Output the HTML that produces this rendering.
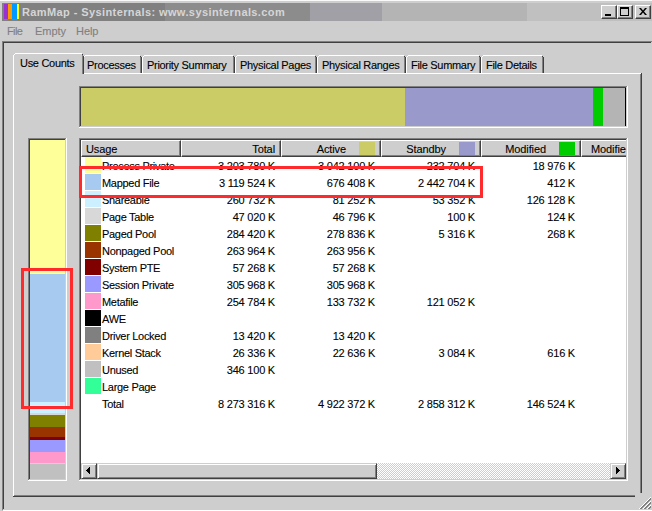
<!DOCTYPE html>
<html><head><meta charset="utf-8">
<style>
*{margin:0;padding:0;box-sizing:border-box}
html,body{width:652px;height:511px;overflow:hidden;background:#cecece;position:relative;font-family:"Liberation Sans",sans-serif;font-size:11px;color:#000}
.a{position:absolute}
.t{position:absolute;white-space:nowrap;line-height:11px;letter-spacing:-0.3px;-webkit-text-stroke:0.1px currentColor}
.n{letter-spacing:-0.22px}
</style></head><body>
<!-- window top -->
<div class="a" style="left:0;top:0;width:652px;height:1px;background:#fafafa"></div>
<!-- title bar -->
<div class="a" style="left:2px;top:3px;width:650px;height:18px;background:linear-gradient(to right,#808080 0,#808080 163px,#8c8c8c 163px,#8c8c8c 308px,#a0a0a6 308px,#a0a0a6 380px,#b4b4b4 380px,#b4b4b4 525px,#c0c0c0 525px)"></div>
<div class="a" style="left:4px;top:4px;width:4px;height:15px;background:#9b30d0"></div>
<div class="a" style="left:8px;top:4px;width:4px;height:15px;background:#ff9900"></div>
<div class="a" style="left:12px;top:4px;width:5px;height:15px;background:#0099ff"></div>
<div class="a" style="left:17px;top:4px;width:2px;height:15px;background:#ffff00"></div>
<div class="t" style="left:22px;top:7px;font-weight:bold;color:#d6d6d6;letter-spacing:0.4px;-webkit-text-stroke:0">RamMap - Sysinternals: www.sysinternals.com</div>
<!-- title buttons -->
<div class="a" style="left:601px;top:5px;width:16px;height:14px;background:#cecece;border-top:1px solid #fff;border-left:1px solid #fff;border-right:1px solid #404040;border-bottom:1px solid #404040;box-shadow:inset -1px -1px 0 #808080"></div>
<div class="a" style="left:605px;top:14px;width:6px;height:2px;background:#000"></div>
<div class="a" style="left:617px;top:5px;width:16px;height:14px;background:#cecece;border-top:1px solid #fff;border-left:1px solid #fff;border-right:1px solid #404040;border-bottom:1px solid #404040;box-shadow:inset -1px -1px 0 #808080"></div>
<div class="a" style="left:620px;top:7px;width:9px;height:9px;border:1px solid #000;border-top-width:2px"></div>
<div class="a" style="left:635px;top:5px;width:16px;height:14px;background:#cecece;border-top:1px solid #fff;border-left:1px solid #fff;border-right:1px solid #404040;border-bottom:1px solid #404040;box-shadow:inset -1px -1px 0 #808080"></div>
<svg class="a" style="left:639px;top:8px" width="8" height="7" viewBox="0 0 8 7"><path d="M0 0h2l2 2.5 2-2.5h2l-3 3.5 3 3.5h-2l-2-2.5-2 2.5h-2l3-3.5z" fill="#000"/></svg>
<!-- menu -->
<div class="t" style="left:7px;top:26px;color:#808080;letter-spacing:-0.6px">File</div>
<div class="t" style="left:35px;top:26px;color:#808080;letter-spacing:-0.05px">Empty</div>
<div class="t" style="left:76px;top:26px;color:#808080;letter-spacing:-0.05px">Help</div>
<!-- client sunken frame -->
<div class="a" style="left:2px;top:41px;width:650px;height:470px;border-top:1px solid #808080;border-left:1px solid #808080;border-bottom:1px solid #fff"></div>
<div class="a" style="left:3px;top:42px;width:648px;height:467px;border-top:1px solid #404040;border-left:1px solid #404040"></div>
<div class="a" style="left:85px;top:55px;width:55px;height:1px;background:#fff"></div>
<div class="a" style="left:84px;top:56px;width:1px;height:1px;background:#fff"></div>
<div class="a" style="left:83px;top:57px;width:1px;height:16px;background:#fff"></div>
<div class="a" style="left:140px;top:56px;width:1px;height:17px;background:#808080"></div>
<div class="a" style="left:141px;top:57px;width:1px;height:16px;background:#404040"></div>
<div class="a" style="left:140px;top:56px;width:1px;height:1px;background:#404040"></div>
<div class="t" style="left:87px;top:60px">Processes</div>
<div class="a" style="left:144px;top:55px;width:89px;height:1px;background:#fff"></div>
<div class="a" style="left:143px;top:56px;width:1px;height:1px;background:#fff"></div>
<div class="a" style="left:142px;top:57px;width:1px;height:16px;background:#fff"></div>
<div class="a" style="left:233px;top:56px;width:1px;height:17px;background:#808080"></div>
<div class="a" style="left:234px;top:57px;width:1px;height:16px;background:#404040"></div>
<div class="a" style="left:233px;top:56px;width:1px;height:1px;background:#404040"></div>
<div class="t" style="left:147px;top:60px">Priority Summary</div>
<div class="a" style="left:237px;top:55px;width:78px;height:1px;background:#fff"></div>
<div class="a" style="left:236px;top:56px;width:1px;height:1px;background:#fff"></div>
<div class="a" style="left:235px;top:57px;width:1px;height:16px;background:#fff"></div>
<div class="a" style="left:315px;top:56px;width:1px;height:17px;background:#808080"></div>
<div class="a" style="left:316px;top:57px;width:1px;height:16px;background:#404040"></div>
<div class="a" style="left:315px;top:56px;width:1px;height:1px;background:#404040"></div>
<div class="t" style="left:240px;top:60px">Physical Pages</div>
<div class="a" style="left:319px;top:55px;width:85px;height:1px;background:#fff"></div>
<div class="a" style="left:318px;top:56px;width:1px;height:1px;background:#fff"></div>
<div class="a" style="left:317px;top:57px;width:1px;height:16px;background:#fff"></div>
<div class="a" style="left:404px;top:56px;width:1px;height:17px;background:#808080"></div>
<div class="a" style="left:405px;top:57px;width:1px;height:16px;background:#404040"></div>
<div class="a" style="left:404px;top:56px;width:1px;height:1px;background:#404040"></div>
<div class="t" style="left:322px;top:60px">Physical Ranges</div>
<div class="a" style="left:408px;top:55px;width:71px;height:1px;background:#fff"></div>
<div class="a" style="left:407px;top:56px;width:1px;height:1px;background:#fff"></div>
<div class="a" style="left:406px;top:57px;width:1px;height:16px;background:#fff"></div>
<div class="a" style="left:479px;top:56px;width:1px;height:17px;background:#808080"></div>
<div class="a" style="left:480px;top:57px;width:1px;height:16px;background:#404040"></div>
<div class="a" style="left:479px;top:56px;width:1px;height:1px;background:#404040"></div>
<div class="t" style="left:411px;top:60px">File Summary</div>
<div class="a" style="left:483px;top:55px;width:59px;height:1px;background:#fff"></div>
<div class="a" style="left:482px;top:56px;width:1px;height:1px;background:#fff"></div>
<div class="a" style="left:481px;top:57px;width:1px;height:16px;background:#fff"></div>
<div class="a" style="left:542px;top:56px;width:1px;height:17px;background:#808080"></div>
<div class="a" style="left:543px;top:57px;width:1px;height:16px;background:#404040"></div>
<div class="a" style="left:542px;top:56px;width:1px;height:1px;background:#404040"></div>
<div class="t" style="left:486px;top:60px">File Details</div>
<div class="a" style="left:13px;top:73px;width:628px;height:1px;background:#fff"></div>
<div class="a" style="left:13px;top:73px;width:1px;height:423px;background:#fff"></div>
<div class="a" style="left:640px;top:74px;width:1px;height:422px;background:#808080"></div>
<div class="a" style="left:641px;top:73px;width:1px;height:424px;background:#404040"></div>
<div class="a" style="left:14px;top:495px;width:627px;height:1px;background:#808080"></div>
<div class="a" style="left:13px;top:496px;width:629px;height:1px;background:#404040"></div>
<div class="a" style="left:14px;top:54px;width:68px;height:20px;background:#cecece"></div>
<div class="a" style="left:15px;top:53px;width:67px;height:1px;background:#fff"></div>
<div class="a" style="left:14px;top:54px;width:1px;height:1px;background:#fff"></div>
<div class="a" style="left:13px;top:55px;width:1px;height:19px;background:#fff"></div>
<div class="a" style="left:82px;top:54px;width:1px;height:20px;background:#808080"></div>
<div class="a" style="left:83px;top:56px;width:1px;height:18px;background:#404040"></div>
<div class="a" style="left:82px;top:54px;width:1px;height:1px;background:#404040"></div>
<div class="t" style="left:20px;top:58px">Use Counts</div>
<div class="a" style="left:635px;top:493px;width:17px;height:16px;background:#cecece"></div>
<svg class="a" style="left:639px;top:497px" width="12" height="12" shape-rendering="crispEdges"><rect x="0" y="11" width="1" height="1" fill="#fff"/><rect x="1" y="10" width="1" height="1" fill="#fff"/><rect x="2" y="9" width="1" height="1" fill="#fff"/><rect x="3" y="8" width="1" height="1" fill="#fff"/><rect x="4" y="7" width="1" height="1" fill="#fff"/><rect x="5" y="6" width="1" height="1" fill="#fff"/><rect x="6" y="5" width="1" height="1" fill="#fff"/><rect x="7" y="4" width="1" height="1" fill="#fff"/><rect x="8" y="3" width="1" height="1" fill="#fff"/><rect x="9" y="2" width="1" height="1" fill="#fff"/><rect x="10" y="1" width="1" height="1" fill="#fff"/><rect x="11" y="0" width="1" height="1" fill="#fff"/><rect x="1" y="11" width="1" height="1" fill="#808080"/><rect x="2" y="10" width="1" height="1" fill="#808080"/><rect x="3" y="9" width="1" height="1" fill="#808080"/><rect x="4" y="8" width="1" height="1" fill="#808080"/><rect x="5" y="7" width="1" height="1" fill="#808080"/><rect x="6" y="6" width="1" height="1" fill="#808080"/><rect x="7" y="5" width="1" height="1" fill="#808080"/><rect x="8" y="4" width="1" height="1" fill="#808080"/><rect x="9" y="3" width="1" height="1" fill="#808080"/><rect x="10" y="2" width="1" height="1" fill="#808080"/><rect x="11" y="1" width="1" height="1" fill="#808080"/><rect x="2" y="11" width="1" height="1" fill="#808080"/><rect x="3" y="10" width="1" height="1" fill="#808080"/><rect x="4" y="9" width="1" height="1" fill="#808080"/><rect x="5" y="8" width="1" height="1" fill="#808080"/><rect x="6" y="7" width="1" height="1" fill="#808080"/><rect x="7" y="6" width="1" height="1" fill="#808080"/><rect x="8" y="5" width="1" height="1" fill="#808080"/><rect x="9" y="4" width="1" height="1" fill="#808080"/><rect x="10" y="3" width="1" height="1" fill="#808080"/><rect x="11" y="2" width="1" height="1" fill="#808080"/><rect x="4" y="11" width="1" height="1" fill="#fff"/><rect x="5" y="10" width="1" height="1" fill="#fff"/><rect x="6" y="9" width="1" height="1" fill="#fff"/><rect x="7" y="8" width="1" height="1" fill="#fff"/><rect x="8" y="7" width="1" height="1" fill="#fff"/><rect x="9" y="6" width="1" height="1" fill="#fff"/><rect x="10" y="5" width="1" height="1" fill="#fff"/><rect x="11" y="4" width="1" height="1" fill="#fff"/><rect x="5" y="11" width="1" height="1" fill="#808080"/><rect x="6" y="10" width="1" height="1" fill="#808080"/><rect x="7" y="9" width="1" height="1" fill="#808080"/><rect x="8" y="8" width="1" height="1" fill="#808080"/><rect x="9" y="7" width="1" height="1" fill="#808080"/><rect x="10" y="6" width="1" height="1" fill="#808080"/><rect x="11" y="5" width="1" height="1" fill="#808080"/><rect x="6" y="11" width="1" height="1" fill="#808080"/><rect x="7" y="10" width="1" height="1" fill="#808080"/><rect x="8" y="9" width="1" height="1" fill="#808080"/><rect x="9" y="8" width="1" height="1" fill="#808080"/><rect x="10" y="7" width="1" height="1" fill="#808080"/><rect x="11" y="6" width="1" height="1" fill="#808080"/><rect x="8" y="11" width="1" height="1" fill="#fff"/><rect x="9" y="10" width="1" height="1" fill="#fff"/><rect x="10" y="9" width="1" height="1" fill="#fff"/><rect x="11" y="8" width="1" height="1" fill="#fff"/><rect x="9" y="11" width="1" height="1" fill="#808080"/><rect x="10" y="10" width="1" height="1" fill="#808080"/><rect x="11" y="9" width="1" height="1" fill="#808080"/><rect x="10" y="11" width="1" height="1" fill="#808080"/><rect x="11" y="10" width="1" height="1" fill="#808080"/></svg>
<div class="a" style="left:79px;top:86px;width:548px;height:1px;background:#808080"></div>
<div class="a" style="left:79px;top:86px;width:1px;height:41px;background:#808080"></div>
<div class="a" style="left:80px;top:87px;width:546px;height:1px;background:#404040"></div>
<div class="a" style="left:80px;top:87px;width:1px;height:39px;background:#404040"></div>
<div class="a" style="left:79px;top:127px;width:549px;height:1px;background:#fff"></div>
<div class="a" style="left:627px;top:86px;width:1px;height:42px;background:#fff"></div>
<div class="a" style="left:81px;top:88px;width:324px;height:38px;background:#cccc66"></div>
<div class="a" style="left:405px;top:88px;width:188px;height:38px;background:#9999cc"></div>
<div class="a" style="left:593px;top:88px;width:10px;height:38px;background:#00cc00"></div>
<div class="a" style="left:603px;top:88px;width:22px;height:38px;background:#b4b4b4"></div>
<div class="a" style="left:625px;top:88px;width:1px;height:38px;background:#000"></div>
<div class="a" style="left:28px;top:138px;width:38px;height:1px;background:#808080"></div>
<div class="a" style="left:28px;top:138px;width:1px;height:342px;background:#808080"></div>
<div class="a" style="left:29px;top:139px;width:36px;height:1px;background:#404040"></div>
<div class="a" style="left:29px;top:139px;width:1px;height:340px;background:#404040"></div>
<div class="a" style="left:28px;top:480px;width:39px;height:1px;background:#fff"></div>
<div class="a" style="left:66px;top:138px;width:1px;height:343px;background:#fff"></div>
<div class="a" style="left:30px;top:140px;width:35px;height:134px;background:#ffff99"></div>
<div class="a" style="left:30px;top:274px;width:35px;height:128px;background:#a6caf0"></div>
<div class="a" style="left:30px;top:402px;width:35px;height:11px;background:#ccf0ff"></div>
<div class="a" style="left:30px;top:413px;width:35px;height:2px;background:#d8d8d8"></div>
<div class="a" style="left:30px;top:415px;width:35px;height:12px;background:#808000"></div>
<div class="a" style="left:30px;top:427px;width:35px;height:10px;background:#993300"></div>
<div class="a" style="left:30px;top:437px;width:35px;height:3px;background:#800000"></div>
<div class="a" style="left:30px;top:440px;width:35px;height:12px;background:#9999ff"></div>
<div class="a" style="left:30px;top:452px;width:35px;height:11px;background:#ff99cc"></div>
<div class="a" style="left:30px;top:463px;width:35px;height:1px;background:#ffcc99"></div>
<div class="a" style="left:30px;top:464px;width:35px;height:15px;background:#c0c0c0"></div>
<div class="a" style="left:79px;top:138px;width:548px;height:1px;background:#808080"></div>
<div class="a" style="left:79px;top:138px;width:1px;height:342px;background:#808080"></div>
<div class="a" style="left:80px;top:139px;width:546px;height:1px;background:#404040"></div>
<div class="a" style="left:80px;top:139px;width:1px;height:340px;background:#404040"></div>
<div class="a" style="left:79px;top:480px;width:549px;height:1px;background:#fff"></div>
<div class="a" style="left:627px;top:138px;width:1px;height:343px;background:#fff"></div>
<div class="a" style="left:81px;top:140px;width:545px;height:339px;background:#fff"></div>
<div class="a" style="left:81px;top:140px;width:545px;height:17px;overflow:hidden">
<div class="a" style="left:0px;top:0;width:100px;height:17px;background:#cecece;border-top:1px solid #fff;border-left:1px solid #fff;border-right:1px solid #404040;border-bottom:1px solid #404040;box-shadow:inset -1px -1px 0 #808080"></div>
<div class="t" style="left:5px;top:4px;letter-spacing:-0.1px">Usage</div>
<div class="a" style="left:100px;top:0;width:100px;height:17px;background:#cecece;border-top:1px solid #fff;border-left:1px solid #fff;border-right:1px solid #404040;border-bottom:1px solid #404040;box-shadow:inset -1px -1px 0 #808080"></div>
<div class="t" style="left:100px;top:4px;width:94px;text-align:right;letter-spacing:-0.1px">Total</div>
<div class="a" style="left:200px;top:0;width:100px;height:17px;background:#cecece;border-top:1px solid #fff;border-left:1px solid #fff;border-right:1px solid #404040;border-bottom:1px solid #404040;box-shadow:inset -1px -1px 0 #808080"></div>
<div class="a" style="left:278px;top:2px;width:16px;height:13px;background:#cccc66"></div>
<div class="t" style="left:200px;top:4px;width:65px;text-align:right;letter-spacing:-0.1px">Active</div>
<div class="a" style="left:300px;top:0;width:100px;height:17px;background:#cecece;border-top:1px solid #fff;border-left:1px solid #fff;border-right:1px solid #404040;border-bottom:1px solid #404040;box-shadow:inset -1px -1px 0 #808080"></div>
<div class="a" style="left:378px;top:2px;width:16px;height:13px;background:#9999cc"></div>
<div class="t" style="left:300px;top:4px;width:65px;text-align:right;letter-spacing:-0.1px">Standby</div>
<div class="a" style="left:400px;top:0;width:100px;height:17px;background:#cecece;border-top:1px solid #fff;border-left:1px solid #fff;border-right:1px solid #404040;border-bottom:1px solid #404040;box-shadow:inset -1px -1px 0 #808080"></div>
<div class="a" style="left:478px;top:2px;width:16px;height:13px;background:#00cc00"></div>
<div class="t" style="left:400px;top:4px;width:65px;text-align:right;letter-spacing:-0.1px">Modified</div>
<div class="a" style="left:500px;top:0;width:120px;height:17px;background:#cecece;border-top:1px solid #fff;border-left:1px solid #fff;border-right:1px solid #404040;border-bottom:1px solid #404040;box-shadow:inset -1px -1px 0 #808080"></div>
<div class="t" style="left:510px;top:4px;letter-spacing:-0.1px">Modified</div>
</div>
<div class="a" style="left:85px;top:157px;width:16px;height:16px;background:#ffff99"></div>
<div class="t" style="left:102px;top:161px">Process Private</div>
<div class="t n" style="left:175px;top:161px;width:100px;text-align:right">3 203 780 K</div>
<div class="t n" style="left:275px;top:161px;width:100px;text-align:right">3 042 100 K</div>
<div class="t n" style="left:375px;top:161px;width:100px;text-align:right">232 704 K</div>
<div class="t n" style="left:475px;top:161px;width:100px;text-align:right">18 976 K</div>
<div class="a" style="left:85px;top:174px;width:16px;height:16px;background:#a6caf0"></div>
<div class="t" style="left:102px;top:178px">Mapped File</div>
<div class="t n" style="left:175px;top:178px;width:100px;text-align:right">3 119 524 K</div>
<div class="t n" style="left:275px;top:178px;width:100px;text-align:right">676 408 K</div>
<div class="t n" style="left:375px;top:178px;width:100px;text-align:right">2 442 704 K</div>
<div class="t n" style="left:475px;top:178px;width:100px;text-align:right">412 K</div>
<div class="a" style="left:85px;top:191px;width:16px;height:16px;background:#ccf0ff"></div>
<div class="t" style="left:102px;top:195px">Shareable</div>
<div class="t n" style="left:175px;top:195px;width:100px;text-align:right">260 732 K</div>
<div class="t n" style="left:275px;top:195px;width:100px;text-align:right">81 252 K</div>
<div class="t n" style="left:375px;top:195px;width:100px;text-align:right">53 352 K</div>
<div class="t n" style="left:475px;top:195px;width:100px;text-align:right">126 128 K</div>
<div class="a" style="left:85px;top:208px;width:16px;height:16px;background:#d8d8d8"></div>
<div class="t" style="left:102px;top:212px">Page Table</div>
<div class="t n" style="left:175px;top:212px;width:100px;text-align:right">47 020 K</div>
<div class="t n" style="left:275px;top:212px;width:100px;text-align:right">46 796 K</div>
<div class="t n" style="left:375px;top:212px;width:100px;text-align:right">100 K</div>
<div class="t n" style="left:475px;top:212px;width:100px;text-align:right">124 K</div>
<div class="a" style="left:85px;top:225px;width:16px;height:16px;background:#808000"></div>
<div class="t" style="left:102px;top:229px">Paged Pool</div>
<div class="t n" style="left:175px;top:229px;width:100px;text-align:right">284 420 K</div>
<div class="t n" style="left:275px;top:229px;width:100px;text-align:right">278 836 K</div>
<div class="t n" style="left:375px;top:229px;width:100px;text-align:right">5 316 K</div>
<div class="t n" style="left:475px;top:229px;width:100px;text-align:right">268 K</div>
<div class="a" style="left:85px;top:242px;width:16px;height:16px;background:#993300"></div>
<div class="t" style="left:102px;top:246px">Nonpaged Pool</div>
<div class="t n" style="left:175px;top:246px;width:100px;text-align:right">263 964 K</div>
<div class="t n" style="left:275px;top:246px;width:100px;text-align:right">263 956 K</div>
<div class="a" style="left:85px;top:259px;width:16px;height:16px;background:#800000"></div>
<div class="t" style="left:102px;top:263px">System PTE</div>
<div class="t n" style="left:175px;top:263px;width:100px;text-align:right">57 268 K</div>
<div class="t n" style="left:275px;top:263px;width:100px;text-align:right">57 268 K</div>
<div class="a" style="left:85px;top:276px;width:16px;height:16px;background:#9999ff"></div>
<div class="t" style="left:102px;top:280px">Session Private</div>
<div class="t n" style="left:175px;top:280px;width:100px;text-align:right">305 968 K</div>
<div class="t n" style="left:275px;top:280px;width:100px;text-align:right">305 968 K</div>
<div class="a" style="left:85px;top:293px;width:16px;height:16px;background:#ff99cc"></div>
<div class="t" style="left:102px;top:297px">Metafile</div>
<div class="t n" style="left:175px;top:297px;width:100px;text-align:right">254 784 K</div>
<div class="t n" style="left:275px;top:297px;width:100px;text-align:right">133 732 K</div>
<div class="t n" style="left:375px;top:297px;width:100px;text-align:right">121 052 K</div>
<div class="a" style="left:85px;top:310px;width:16px;height:16px;background:#000000"></div>
<div class="t" style="left:102px;top:314px">AWE</div>
<div class="a" style="left:85px;top:327px;width:16px;height:16px;background:#808080"></div>
<div class="t" style="left:102px;top:331px">Driver Locked</div>
<div class="t n" style="left:175px;top:331px;width:100px;text-align:right">13 420 K</div>
<div class="t n" style="left:275px;top:331px;width:100px;text-align:right">13 420 K</div>
<div class="a" style="left:85px;top:344px;width:16px;height:16px;background:#ffcc99"></div>
<div class="t" style="left:102px;top:348px">Kernel Stack</div>
<div class="t n" style="left:175px;top:348px;width:100px;text-align:right">26 336 K</div>
<div class="t n" style="left:275px;top:348px;width:100px;text-align:right">22 636 K</div>
<div class="t n" style="left:375px;top:348px;width:100px;text-align:right">3 084 K</div>
<div class="t n" style="left:475px;top:348px;width:100px;text-align:right">616 K</div>
<div class="a" style="left:85px;top:361px;width:16px;height:16px;background:#c0c0c0"></div>
<div class="t" style="left:102px;top:365px">Unused</div>
<div class="t n" style="left:175px;top:365px;width:100px;text-align:right">346 100 K</div>
<div class="a" style="left:85px;top:378px;width:16px;height:16px;background:#33ff99"></div>
<div class="t" style="left:102px;top:382px">Large Page</div>
<div class="t" style="left:102px;top:399px">Total</div>
<div class="t n" style="left:175px;top:399px;width:100px;text-align:right">8 273 316 K</div>
<div class="t n" style="left:275px;top:399px;width:100px;text-align:right">4 922 372 K</div>
<div class="t n" style="left:375px;top:399px;width:100px;text-align:right">2 858 312 K</div>
<div class="t n" style="left:475px;top:399px;width:100px;text-align:right">146 524 K</div>
<div class="a" style="left:81px;top:463px;width:545px;height:16px;background:repeating-conic-gradient(#fff 0 25%,#cecece 0 50%) 1px 0/2px 2px"></div>
<div class="a" style="left:81px;top:463px;width:16px;height:16px;background:#cecece;border-top:1px solid #cecece;border-left:1px solid #cecece;border-right:1px solid #404040;border-bottom:1px solid #404040;box-shadow:inset 1px 1px 0 #fff,inset -1px -1px 0 #808080"></div>
<div class="a" style="left:97px;top:463px;width:280px;height:16px;background:#cecece;border-top:1px solid #cecece;border-left:1px solid #cecece;border-right:1px solid #404040;border-bottom:1px solid #404040;box-shadow:inset 1px 1px 0 #fff,inset -1px -1px 0 #808080"></div>
<div class="a" style="left:610px;top:463px;width:16px;height:16px;background:#cecece;border-top:1px solid #cecece;border-left:1px solid #cecece;border-right:1px solid #404040;border-bottom:1px solid #404040;box-shadow:inset 1px 1px 0 #fff,inset -1px -1px 0 #808080"></div>
<svg class="a" style="left:86px;top:467px" width="4" height="7" shape-rendering="crispEdges"><rect x="0" y="3" width="1" height="1"/><rect x="1" y="2" width="1" height="3"/><rect x="2" y="1" width="1" height="5"/><rect x="3" y="0" width="1" height="7"/></svg>
<svg class="a" style="left:616px;top:467px" width="4" height="7" shape-rendering="crispEdges"><rect x="3" y="3" width="1" height="1"/><rect x="2" y="2" width="1" height="3"/><rect x="1" y="1" width="1" height="5"/><rect x="0" y="0" width="1" height="7"/></svg>
<div class="a" style="left:21px;top:268px;width:52px;height:141px;border:3px solid #ff2a2c"></div>
<div class="a" style="left:79px;top:166px;width:404px;height:32px;border:3px solid #ff2a2c"></div>
</body></html>
